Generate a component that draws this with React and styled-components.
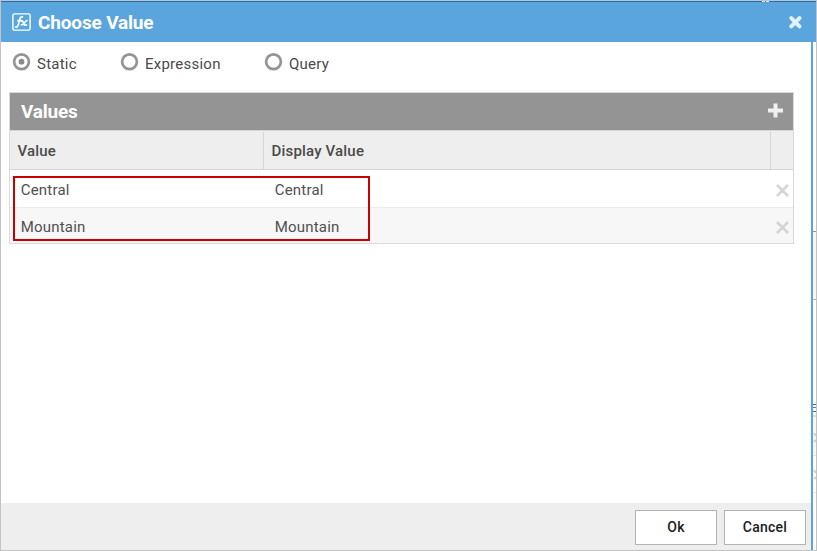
import React from "react";
import styled, { createGlobalStyle } from "styled-components";

const GlobalStyle = createGlobalStyle`
  * { box-sizing: border-box; }
  body { margin: 0; overflow: hidden; font-family: Roboto, "Liberation Sans", sans-serif; }
`;

const Frame = styled.div`
  width: 817px;
  height: 551px;
  display: flex;
  flex-direction: column;
  border: 1px solid #c3c3c3;
  background: #fff;
`;

const TopEdge = styled.div`
  height: 1px;
  background: #1f72b8;
  display: flex;
  justify-content: flex-end;
  padding-right: 47px;
  gap: 1px;
`;

const EdgeTick = styled.span`
  width: 3px;
  height: 1px;
  background: #dcebf7;
`;

const TitleBar = styled.header`
  height: 40px;
  flex: none;
  display: flex;
  align-items: center;
  padding: 0 14px 0 11px;
  background: #5aa5de;
  color: #fff;
`;

const Title = styled.h1`
  margin: 0 auto 0 7px;
  padding-top: 2px;
  font-size: 19px;
  line-height: 38px;
  font-weight: 700;
  letter-spacing: -0.16px;
`;

const IconButton = styled.button`
  display: flex;
  padding: 0;
  border: 0;
  background: none;
`;

const Main = styled.div`
  flex: 1;
  display: flex;
  min-height: 0;
`;

const Dialog = styled.section`
  width: 812px;
  display: flex;
  flex-direction: column;
  border-right: 2px solid #5aa5de;
`;

const Backdrop = styled.svg`
  display: block;
  flex: none;
`;

const Options = styled.div`
  height: 50px;
  display: flex;
  padding-left: 11px;
`;

const Option = styled.label`
  width: ${(p) => p.$width}px;
  height: 42px;
  display: flex;
  align-items: center;
  gap: 6px;
  font-size: 15px;
  letter-spacing: ${(p) => p.$spacing}px;
  color: #4a4a4a;
  svg { margin-top: -3px; }
  span { padding-top: 1px; }
`;

const Grid = styled.div`
  position: relative;
  width: 785px;
  margin-left: 8px;
  border: 1px solid #dadada;
`;

const GridTitle = styled.div`
  height: 37px;
  display: flex;
  align-items: center;
  justify-content: space-between;
  padding: 0 10px 0 11px;
  background: #949494;
  color: #fff;
  font-size: 19px;
  font-weight: 700;
  letter-spacing: -0.2px;
  button { margin-top: -2px; }
`;

const HeaderRow = styled.div`
  height: 40px;
  display: grid;
  grid-template-columns: 253px 507px 23px;
  padding-top: 1px;
  background: #eee;
  border-top: 1px solid #d5d5d5;
  border-bottom: 1px solid #d5d5d5;
`;

const HeaderCell = styled.div`
  padding-left: 7.5px;
  border-left: ${(p) => (p.$line ? "1px solid #d5d5d5" : "0")};
  line-height: 39px;
  height: 37px;
  font-size: 15px;
  font-weight: 500;
  letter-spacing: 0.18px;
  color: #4a4a4a;
`;

const Row = styled.div`
  height: ${(p) => (p.$alt ? 35 : 38)}px;
  display: grid;
  grid-template-columns: 254px 502px 27px;
  background: ${(p) => (p.$alt ? "#f7f7f7" : "#fff")};
  border-bottom: ${(p) => (p.$alt ? "0" : "1px solid #ececec")};
  font-size: 15px;
  line-height: ${(p) => (p.$alt ? 39 : 41)}px;
  letter-spacing: 0.18px;
  color: #505050;
`;

const Cell = styled.div`
  height: 35px;
  padding-left: 10.8px;
`;

const RemoveCell = styled.div`
  padding: ${(p) => (p.$alt ? 12.5 : 13.5)}px 0 0 10px;
  svg { display: block; }
`;

const Highlight = styled.div`
  position: absolute;
  left: 3px;
  top: 83px;
  width: 357px;
  height: 65px;
  border: 2px solid #c80000;
`;

const Footer = styled.footer`
  height: 47px;
  margin-top: auto;
  display: flex;
  justify-content: flex-end;
  gap: 7px;
  padding: 7px 5px 0 0;
  background: #eee;
`;

const Button = styled.button`
  width: 82px;
  height: 35px;
  padding: 0 0 2px;
  background: #fff;
  border: 1px solid #b3b3b3;
  color: #1c1c1c;
  font: 500 14px Roboto, "Liberation Sans", sans-serif;
  letter-spacing: 0.25px;
`;

const FormulaIcon = () => (
  <svg width="19" height="20" viewBox="0 0 19 20" fill="none" stroke="#fff">
    <rect x="0.9" y="1.9" width="17.2" height="16.2" rx="1.6" strokeWidth="1.4" />
    <path d="M3 14.600c1.900 1.200 3-.4 3.500-2.500l1.300-5.200c.5-1.900 1.700-2.500 3.300-1.700M5.200 8.700h4.800" strokeWidth="1.700" />
    <path d="M8.700 9.200c2.400-1 2.300.3 3 2.400.5 1.700 1.400 2.100 3.300.9M15.800 8.500c-1.900-.3-2.500 1.400-3.600 2.700-1 1.200-1.900 1.900-3.500 1.500" strokeWidth="1.600" />
  </svg>
);

const RadioIcon = ({ checked }) => (
  <svg width="19" height="19" viewBox="0 0 19 19">
    <circle cx="9.500" cy="9.700" r="7.400" fill="#fff" stroke="#949494" strokeWidth="2.700" />
    {checked && <circle cx="9.500" cy="9.700" r="2.900" fill="#8b8b8b" />}
  </svg>
);

const RemoveIcon = () => (
  <svg width="13" height="13" viewBox="0 0 13 13">
    <path d="M1 1l11 11M12 1L1 12" stroke="#d5d5d5" strokeWidth="2.700" />
  </svg>
);

const rows = ["Central", "Mountain"];

export default function App() {
  return (
    <>
      <GlobalStyle />
      <Frame>
        <TopEdge><EdgeTick /><EdgeTick /></TopEdge>
        <TitleBar>
          <FormulaIcon />
          <Title>Choose Value</Title>
          <IconButton aria-label="Close">
            <svg width="14" height="14" viewBox="0 0 14 14">
              <path d="M3.300 3.100l8.200 8.200M11.500 3.100l-8.200 8.200" stroke="#e3f1fd" strokeWidth="4" strokeLinecap="round" />
            </svg>
          </IconButton>
        </TitleBar>
        <Main>
          <Dialog>
            <Options>
              <Option $width={108} $spacing={0.22}><RadioIcon checked /><span>Static</span></Option>
              <Option $width={144} $spacing={0.24}><RadioIcon /><span>Expression</span></Option>
              <Option $width={100} $spacing={0.24}><RadioIcon /><span>Query</span></Option>
            </Options>
            <Grid>
              <GridTitle>
                Values
                <IconButton aria-label="Add value">
                  <svg width="15" height="15" viewBox="0 0 15 15">
                    <path d="M7.500 0.500v14M0 7.500h15" stroke="#f0f0f0" strokeWidth="4" />
                  </svg>
                </IconButton>
              </GridTitle>
              <HeaderRow>
                <HeaderCell>Value</HeaderCell>
                <HeaderCell $line>Display Value</HeaderCell>
                <HeaderCell $line />
              </HeaderRow>
              {rows.map((name, i) => (
                <Row key={name} $alt={i % 2 === 1}>
                  <Cell>{name}</Cell>
                  <Cell>{name}</Cell>
                  <RemoveCell $alt={i % 2 === 1}><RemoveIcon /></RemoveCell>
                </Row>
              ))}
              <Highlight />
            </Grid>
            <Footer>
              <Button>Ok</Button>
              <Button>Cancel</Button>
            </Footer>
          </Dialog>
          <Backdrop width="3" height="508" viewBox="0 0 3 508">
            <rect y="189" width="3" height="1" fill="#949494" />
            <rect y="190" width="3" height="68" fill="#f8f8f8" />
            <rect y="257" width="3" height="1" fill="#b5b5b5" />
            <path d="M0 362.500h3M0 369.500h3" stroke="#2d70a8" />
            <path d="M0 365.500h3" stroke="#777" />
            <rect y="373" width="3" height="2" fill="#ddd" />
            <rect y="375" width="3" height="38" fill="#f7f7f7" />
            <path d="M1 391l2 3M3 398l-2 2M1 428l2 3M3 435l-2 2" stroke="#d0d0d0" strokeWidth="2" />
            <path d="M0 413.500h3M0 450.500h3" stroke="#e5e5e5" />
          </Backdrop>
        </Main>
      </Frame>
    </>
  );
}
